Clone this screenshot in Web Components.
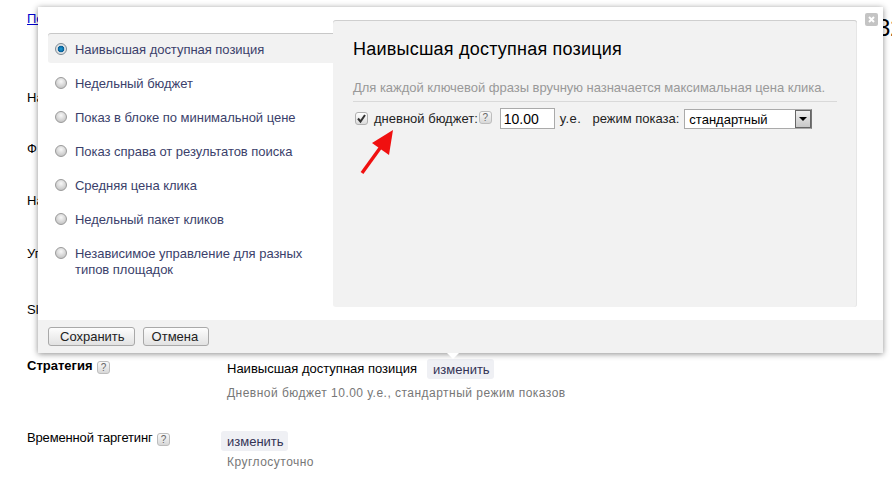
<!DOCTYPE html>
<html lang="ru">
<head>
<meta charset="utf-8">
<title>Стратегия</title>
<style>
    html, body { margin: 0; height: 100%; overflow: hidden; background: #fff; }
    body { font: 13px/16px "Liberation Sans", Arial, sans-serif; color: #000; }
</style>
</head>
<body>
<x-page>
    <x-top-row></x-top-row>
    <x-row style="--h: 51px">На</x-row>
    <x-row style="--h: 52px">Ф</x-row>
    <x-row style="--h: 53px">На</x-row>
    <x-row style="--h: 56px">Уп</x-row>
    <x-row style="--h: 56px">Sl</x-row>
    <x-row style="--h: 72px" strong help>
        Стратегия
        <div slot="value" class="line">
            <span>Наивысшая доступная позиция</span>
            <x-link-button style="margin-left: 10px">изменить</x-link-button>
        </div>
        <x-note slot="value" style="margin-top: 6px">Дневной бюджет 10.00 у.е., стандартный режим показов</x-note>
    </x-row>
    <x-row style="--h: 50px; letter-spacing: -0.15px" help>
        Временной таргетинг
        <x-link-button slot="value" style="margin-left: -6px; letter-spacing: 0">изменить</x-link-button>
        <x-note slot="value" style="margin-top: 3px">Круглосуточно</x-note>
    </x-row>
</x-page>

<x-strategy-dialog>
    <x-strategy-tab selected>Наивысшая доступная позиция</x-strategy-tab>
    <x-strategy-tab>Недельный бюджет</x-strategy-tab>
    <x-strategy-tab>Показ в блоке по минимальной цене</x-strategy-tab>
    <x-strategy-tab>Показ справа от результатов поиска</x-strategy-tab>
    <x-strategy-tab>Средняя цена клика</x-strategy-tab>
    <x-strategy-tab>Недельный пакет кликов</x-strategy-tab>
    <x-strategy-tab>Независимое управление для разных типов площадок</x-strategy-tab>

    <x-strategy-panel slot="panel" title-text="Наивысшая доступная позиция">
        Для каждой ключевой фразы вручную назначается максимальная цена клика.
    </x-strategy-panel>

    <x-button slot="footer" style="padding: 0 9px 0 11px">Сохранить</x-button>
    <x-button slot="footer" style="padding: 0 10px 0 8px">Отмена</x-button>
</x-strategy-dialog>

<script>
    class XHelp extends HTMLElement {
        constructor() {
            super();
            this.attachShadow({ mode: 'open' }).innerHTML = `
                <style>
                    :host {
                        display: inline-block;
                        width: 13px;
                        height: 13px;
                        box-sizing: border-box;
                        border: 1px solid #bdbdbd;
                        border-radius: 3px;
                        background: linear-gradient(#fafafa, #d8d8d8);
                        color: #666;
                        font: 10px/11px "Liberation Sans", Arial, sans-serif;
                        letter-spacing: 0;
                        text-align: center;
                    }
                </style>?`;
        }
    }
    customElements.define('x-help', XHelp);

    class XPage extends HTMLElement {
        constructor() {
            super();
            this.attachShadow({ mode: 'open' }).innerHTML = `
                <style>
                    :host { display: block; }
                </style>
                <slot></slot>`;
        }
    }
    customElements.define('x-page', XPage);

    class XTopRow extends HTMLElement {
        constructor() {
            super();
            this.attachShadow({ mode: 'open' }).innerHTML = `
                <style>
                    :host {
                        display: flex;
                        justify-content: space-between;
                        height: 89px;
                        box-sizing: border-box;
                        padding: 11px 0 0 27px;
                        overflow: hidden;
                    }
                    a { color: #00c; height: 16px; }
                    h1 {
                        margin: 4px -12px 0 0;
                        width: 27px;
                        font: 24px/26px "Liberation Sans", Arial, sans-serif;
                    }
                </style>
                <a href="#">По</a>
                <h1>32</h1>`;
        }
    }
    customElements.define('x-top-row', XTopRow);

    class XRow extends HTMLElement {
        constructor() {
            super();
            const help = this.hasAttribute('help') ? '<x-help></x-help>' : '';
            this.attachShadow({ mode: 'open' }).innerHTML = `
                <style>
                    :host {
                        display: grid;
                        grid-template-columns: 200px 1fr;
                        height: var(--h);
                        padding-left: 27px;
                    }
                    .label { padding-top: 1px; }
                    :host([strong]) .label { font-weight: bold; }
                    x-help { margin-left: 1px; vertical-align: -1px; }
                    .value { padding-top: 2px; letter-spacing: 0; }
                    ::slotted(.line) { display: flex; align-items: center; }
                </style>
                <div class="label"><slot></slot>${help}</div>
                <div class="value"><slot name="value"></slot></div>`;
        }
    }
    customElements.define('x-row', XRow);

    class XLinkButton extends HTMLElement {
        constructor() {
            super();
            this.attachShadow({ mode: 'open' }).innerHTML = `
                <style>
                    :host {
                        display: inline-block;
                        height: 20px;
                        padding: 0 4px 0 6px;
                        border-radius: 3px;
                        background: #eff0f4;
                        color: #335;
                        font-size: 13px;
                        line-height: 21px;
                    }
                </style>
                <slot></slot>`;
        }
    }
    customElements.define('x-link-button', XLinkButton);

    class XNote extends HTMLElement {
        constructor() {
            super();
            this.attachShadow({ mode: 'open' }).innerHTML = `
                <style>
                    :host {
                        display: block;
                        color: #777;
                        font-size: 12px;
                        letter-spacing: 0.48px;
                    }
                </style>
                <slot></slot>`;
        }
    }
    customElements.define('x-note', XNote);

    class XButton extends HTMLElement {
        constructor() {
            super();
            this.attachShadow({ mode: 'open' }).innerHTML = `
                <style>
                    :host {
                        display: inline-block;
                        height: 19px;
                        box-sizing: border-box;
                        border: 1px solid #a9a9a9;
                        border-radius: 3px;
                        background: linear-gradient(#fdfdfd, #e2e2e2);
                        color: #222;
                        font-size: 13px;
                        line-height: 17px;
                    }
                </style>
                <slot></slot>`;
        }
    }
    customElements.define('x-button', XButton);

    class XStrategyTab extends HTMLElement {
        constructor() {
            super();
            this.attachShadow({ mode: 'open' }).innerHTML = `
                <style>
                    :host {
                        display: flex;
                        gap: 8px;
                        box-sizing: border-box;
                        padding: 9px 20px 5px 7px;
                        border-radius: 3px 0 0 3px;
                        color: #3b3f6b;
                        letter-spacing: -0.03px;
                    }
                    :host([selected]) {
                        background: #f2f2f2;
                        box-shadow: inset 0 1px 0 #c8c8c8;
                    }
                    .radio {
                        flex: none;
                        width: 12px;
                        height: 12px;
                        margin-top: 1px;
                        box-sizing: border-box;
                        border: 1px solid #9a9a9a;
                        border-radius: 50%;
                        background: radial-gradient(circle at 50% 35%, #f8f8f8, #b8b8b8);
                    }
                    :host([selected]) .radio {
                        border-color: #7d8a94;
                        background: radial-gradient(circle, #1ea0d8 0, #075c96 3px, #d8dde0 3.6px, #f0f0f0 6px);
                    }
                </style>
                <div class="radio"></div>
                <div><slot></slot></div>`;
        }
    }
    customElements.define('x-strategy-tab', XStrategyTab);

    class XStrategyPanel extends HTMLElement {
        constructor() {
            super();
            const title = this.getAttribute('title-text');
            this.attachShadow({ mode: 'open' }).innerHTML = `
                <style>
                    :host {
                        display: block;
                        position: relative;
                        height: 100%;
                        box-sizing: border-box;
                        padding: 18px 20px 0;
                        border-radius: 3px;
                        background: #f2f2f2;
                        box-shadow: inset 0 1px 0 #cfcfcf, inset -1px 0 0 #e6e6e6;
                    }
                    h2 {
                        margin: 0 0 20px;
                        font: 18px/22px "Liberation Sans", Arial, sans-serif;
                        letter-spacing: 0.22px;
                    }
                    .desc {
                        padding-bottom: 5px;
                        border-bottom: 1px solid #d9d9d9;
                        color: #999;
                        letter-spacing: -0.03px;
                    }
                    .budget {
                        display: flex;
                        align-items: center;
                        height: 21px;
                        margin-top: 6px;
                        padding-left: 2px;
                        color: #222;
                    }
                    .check {
                        width: 13px;
                        height: 13px;
                        box-sizing: border-box;
                        border: 1px solid #b0b0b0;
                        border-radius: 3px;
                        background: linear-gradient(#fff, #dcdcdc);
                    }
                    .check svg { display: block; }
                    x-help { margin-left: 1px; margin-top: -3px; }
                    .input {
                        width: 55px;
                        height: 21px;
                        box-sizing: border-box;
                        margin: 0 5px 0 8px;
                        padding: 2px 3px;
                        border: 1px solid #aaa;
                        background: #fff;
                        color: #000;
                        font-size: 14px;
                    }
                    .select {
                        display: flex;
                        justify-content: space-between;
                        width: 128px;
                        height: 20px;
                        box-sizing: border-box;
                        margin-left: 5px;
                        padding-left: 4px;
                        border: 1px solid #aaa;
                        border-right-color: #777;
                        background: #fff;
                        color: #000;
                        line-height: 19px;
                    }
                    .drop {
                        display: flex;
                        align-items: center;
                        justify-content: center;
                        width: 16px;
                        box-sizing: border-box;
                        border: 1px solid #666;
                        background: linear-gradient(#efefef, #c8c8c8);
                    }
                    .drop i {
                        border: 4px solid transparent;
                        border-top: 4px solid #000;
                        border-bottom: 0;
                    }
                    .arrow { position: absolute; left: 25px; top: 108px; }
                </style>
                <h2>${title}</h2>
                <div class="desc"><slot></slot></div>
                <div class="budget">
                    <div class="check">
                        <svg width="11" height="11" viewBox="0 0 11 11"><path d="M2 5.5 4.5 8.5 9 2" fill="none" stroke="#333" stroke-width="2"/></svg>
                    </div>
                    <span style="margin-left: 6px">дневной бюджет:</span>
                    <x-help></x-help>
                    <div class="input">10.00</div>
                    <span style="letter-spacing: 0.5px">у.е.</span>
                    <span style="margin-left: 11px">режим показа:</span>
                    <div class="select">стандартный<div class="drop"><i></i></div></div>
                </div>
                <svg class="arrow" width="40" height="50" viewBox="0 0 40 50">
                    <path d="M4 45 25 16" stroke="#f01010" stroke-width="3.4" fill="none"/>
                    <path d="M35 2 31 27 14 15Z" fill="#f01010"/>
                </svg>`;
        }
    }
    customElements.define('x-strategy-panel', XStrategyPanel);

    class XStrategyDialog extends HTMLElement {
        constructor() {
            super();
            this.attachShadow({ mode: 'open' }).innerHTML = `
                <style>
                    :host {
                        position: absolute;
                        left: 38px;
                        top: 7px;
                        width: 845px;
                        height: 346px;
                        display: flex;
                        flex-direction: column;
                        background: #fff;
                        box-shadow: 0 1px 6px rgba(0, 0, 0, 0.45);
                    }
                    .body {
                        flex: 1;
                        display: flex;
                        min-height: 0;
                        padding: 13px 26px 13px 10px;
                    }
                    .tabs {
                        flex: none;
                        display: flex;
                        flex-direction: column;
                        gap: 4px;
                        width: 285px;
                        padding-top: 13px;
                    }
                    .panel { flex: 1; }
                    .footer {
                        display: flex;
                        gap: 8px;
                        height: 33px;
                        box-sizing: border-box;
                        padding: 7px 10px;
                        background: #f2f2f2;
                    }
                    .close {
                        position: absolute;
                        left: 827px;
                        top: 6px;
                        width: 13px;
                        height: 13px;
                        border-radius: 2px;
                        background: #c4c4c4;
                    }
                    .close svg { display: block; }
                    .notch {
                        position: absolute;
                        left: 409px;
                        top: 346px;
                        border: 6px solid transparent;
                        border-top: 6px solid #fff;
                        border-bottom: 0;
                    }
                </style>
                <div class="body">
                    <div class="tabs"><slot></slot></div>
                    <div class="panel"><slot name="panel"></slot></div>
                </div>
                <div class="footer"><slot name="footer"></slot></div>
                <div class="close">
                    <svg width="13" height="13" viewBox="0 0 13 13"><path d="M4 4 9 9M9 4 4 9" stroke="#fff" stroke-width="2"/></svg>
                </div>
                <div class="notch"></div>`;
        }
    }
    customElements.define('x-strategy-dialog', XStrategyDialog);
</script>
</body>
</html>
